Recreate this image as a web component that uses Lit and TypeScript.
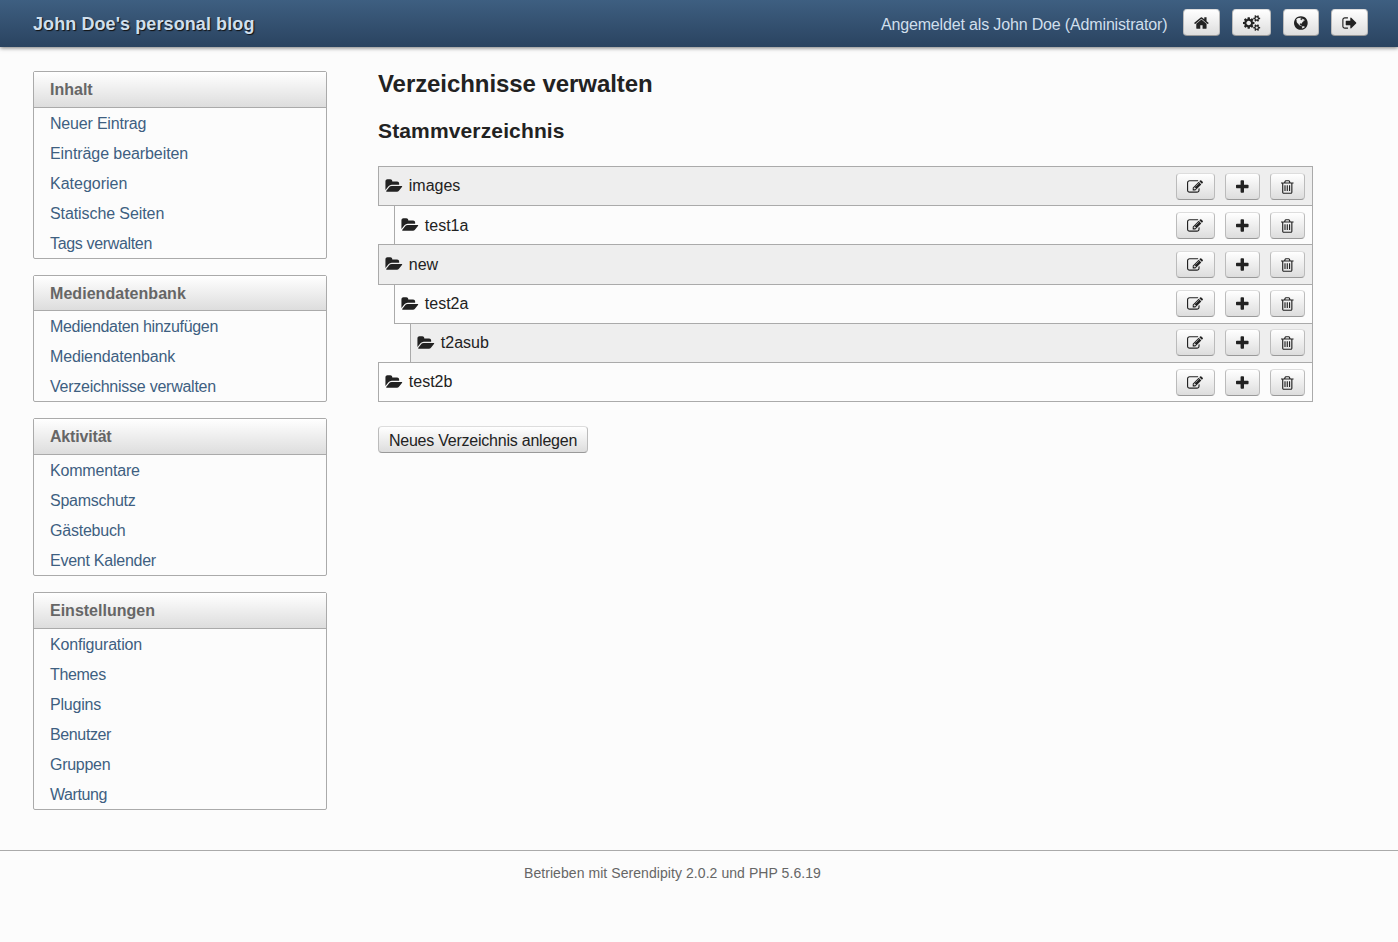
import { LitElement, html, css, svg } from "lit";
import { customElement, property } from "lit/decorators.js";
import { styleMap } from "lit/directives/style-map.js";

interface Glyph {
  x: number;
  w: number;
  d: string;
}

const smallCog = (y: number) =>
  `M1856 ${y}v140q0 16-149 31-12 27-30 52 51 113 51 138 0 4-4 7-122 71-124 71-8 0-46-47t-52-68q-20 2-30 2t-30-2q-14 21-52 68t-46 47q-2 0-124-71-4-3-4-7 0-25 51-138-18-25-30-52-149-15-149-31v-140q0-16 149-31 13-29 30-52-51-113-51-138 0-4 4-7 4-2 35-20t59-34 30-16q8 0 46 46.5t52 67.5q20-2 30-2t30 2q51-71 92-112l6-2q4 0 124 70 4 3 4 7 0 25-51 138 17 23 30 52 149 15 149 31z`;

/* Glyphs are drawn on a grid of 112 units per pixel, 1792 units high. */
const GLYPHS: Record<string, Glyph> = {
  home: {
    x: 64,
    w: 1664,
    d: "M1472 992v480q0 26-19 45t-45 19h-384v-384h-256v384h-384q-26 0-45-19t-19-45v-480q0-1 .5-3t.5-3l575-474 575 474q1 2 1 6zm223-69l-62 74q-8 9-21 11h-3q-13 0-21-7l-692-577-692 577q-12 8-24 7-13-2-21-11l-62-74q-8-10-7-23.5t11-21.5l719-599q32-26 76-26t76 26l244 204v-195q0-14 9-23t23-9h192q14 0 23 9t9 23v408l219 182q10 8 11 21.5t-7 23.5z",
  },
  cogs: {
    x: -64,
    w: 1920,
    d:
      "M832 896q0-106-75-181t-181-75-181 75-75 181 75 181 181 75 181-75 75-181zm768 512q0-52-38-90t-90-38-90 38-38 90q0 53 37.5 90.5t90.5 37.5 90.5-37.5 37.5-90.5zm0-1024q0-52-38-90t-90-38-90 38-38 90q0 53 37.5 90.5t90.5 37.5 90.5-37.5 37.5-90.5zm-384 421v185q0 10-7 19.5t-16 10.5l-155 24q-11 35-32 76 34 48 90 115 7 11 7 20 0 12-7 19-23 30-82.5 89.5t-78.5 59.5q-11 0-21-7l-115-90q-37 19-77 31-11 108-23 155-7 24-30 24h-186q-11 0-20-7.5t-10-17.5l-23-153q-34-10-75-31l-118 89q-7 7-20 7-11 0-21-8-144-133-144-160 0-9 7-19 10-14 41-53t47-61q-23-44-35-82l-152-24q-10-1-17-9.5t-7-19.5v-185q0-10 7-19.5t16-10.5l155-24q11-35 32-76-34-48-90-115-7-11-7-20 0-12 7-20 22-30 82-89t79-59q11 0 21 7l115 90q34-18 77-32 11-108 23-154 7-24 30-24h186q11 0 20 7.5t10 17.5l23 153q34 10 75 31l118-89q8-7 20-7 11 0 21 8 144 133 144 160 0 8-7 19-12 16-42 54t-45 60q23 48 34 82l152 23q10 2 17 10.5t7 19.5z" +
      smallCog(1338) +
      smallCog(314),
  },
  globe: {
    x: 128,
    w: 1536,
    d: "M896 128q209 0 385.5 103t279.5 279.5 103 385.5-103 385.5-279.5 279.5-385.5 103-385.5-103-279.5-279.5-103-385.5 103-385.5 279.5-279.5 385.5-103zm274 521q-2 1-9.5 9.5t-13.5 9.5q2 0 4.5-5t5-11 3.5-7q6-7 22-15 14-6 52-12 34-8 51 11-2-2 9.5-13t14.5-12q3-2 15-4.5t15-7.5l2-22q-12 1-17.5-7t-6.5-21q0 2-6 8 0-7-4.5-8t-11.5 1-9 1q-10-3-15-7.5t-8-16.5-4-15q-2-5-9.5-11t-9.5-10q-1-2-2.5-5.5t-3-6.5-4-5.5-5.5-2.5-7 5-7.5 10-4.5 5q-3-2-6-1.5t-4.5 1-4.5 3-5 3.5q-3 2-8.5 3t-8.5 2q15-5-1-11-10-4-16-3 9-4 7.5-12t-8.5-14h5q-1-4-8.5-8.5t-17.5-8.5-13-6q-8-5-34-9.5t-33-.5q-5 6-4.5 10.5t4 14 3.5 12.5q1 6-5.5 13t-6.5 12q0 7 14 15.5t10 21.5q-3 8-16 16t-16 12q-5 8-1.5 18.5t10.5 16.5q2 2 1.5 4t-3.5 4.5-5.5 4-6.5 3.5l-3 2q-11 5-20.5-6t-13.5-26q-7-25-16-30-23-8-29 1-5-13-41-26-25-9-58-4 6-1 0-15-7-15-19-12 3-6 4-17.5t1-13.5q3-13 12-23 1-1 7-8.5t9.5-13.5.5-6q35 4 50-11 5-5 11.5-17t10.5-17q9-6 14-5.5t14.5 5.5 14.5 5q14 1 15.5-11t-7.5-20q12 1 3-17-4-7-8-9-12-4-27 5-8 4 2 8-1-1-9.5 10.5t-16.5 17.5-16-5q-1-1-5.5-13.5t-9.5-13.5q-8 0-16 15 3-8-11-15t-24-8q19-12-8-27-7-4-20.5-5t-19.5 4q-5 7-5.5 11.5t5 8 10.5 5.5 11.5 4 8.5 3q14 10 8 14-2 1-8.5 3.5t-11.5 4.5-6 4q-3 4 0 14t-2 14q-5-5-9-17.5t-7-16.5q7 9-25 6l-10-1q-4 0-16 2t-20.5 1-13.5-8q-4-8 0-20 1-4 4-2-4-3-11-9.5t-10-8.5q-46 15-94 41 6 1 12-1 5-2 13-6.5t10-5.5q34-14 42-7l5-5q14 16 20 25-7-4-30-1-20 6-22 12 7 12 5 18-4-3-11.5-10t-14.5-11-15-5q-16 0-22 1-146 80-235 222 7 7 12 8 4 1 5 9t2.5 11 11.5-3q9 8 3 19 1-1 44 27 19 17 21 21 3 11-10 18-1-2-9-9t-9-4q-3 5 .5 18.5t10.5 12.5q-7 0-9.5 16t-2.5 35.5-1 23.5l2 1q-3 12 5.5 34.5t21.5 19.5q-13 3 20 43 6 8 8 9 3 2 12 7.5t15 10 10 10.5q4 5 10 22.5t14 23.5q-2 6 9.5 20t10.5 23q-1 0-2.5 1t-2.5 1q3 7 15.5 14t15.5 13q1 3 2 10t3 11 8 2q2-20-24-62-15-25-17-29-3-5-5.5-15.5t-4.5-14.5q2 0 6 1.5t8.5 3.5 7.5 4 2 3q-3 7 2 17.5t12 18.5 17 19 12 13q6 6 14 19.5t0 13.5q9 0 20 10.5t17 19.5q5 8 8 26t5 24q2 7 8.5 13.5t12.5 9.5l16 8 13 7q5 2 18.5 10.5t21.5 11.5q10 4 16 4t14.5-2.5 13.5-3.5q15-2 29 15t21 21q36 19 55 11-2 1 .5 7.5t8 15.5 9 14.5 5.5 8.5q5 6 18 15t18 15q6-4 7-9-3 8 7 20t18 10q14-3 14-32-31 15-49-18 0-1-2.5-5.5t-4-8.5-2.5-8.5 0-7.5 5-3q9 0 10-3.5t-2-12.5-4-13q-1-8-11-20t-12-15q-5 9-16 8t-16-9q0 1-1.5 5.5t-1.5 6.5q-13 0-15-1 1-3 2.5-17.5t3.5-22.5q1-4 5.5-12t7.5-14.5 4-12.5-4.5-9.5-17.5-2.5q-19 1-26 20-1 3-3 10.5t-5 11.5-9 7q-7 3-24 2t-24-5q-13-8-22.5-29t-9.5-37q0-10 2.5-26.5t3-25-5.5-24.5q3-2 9-9.5t10-10.5q2-1 4.5-1.5t4.5 0 4-1.5 3-6q-1-1-4-3-3-3-4-3 7 3 28.5-1.5t27.5 1.5q15 11 22-2 0-1-2.5-9.5t-.5-13.5q5 27 29 9 3 3 15.5 5t17.5 5q3 2 7 5.5t5.5 4.5 5-.5 8.5-6.5q10 14 12 24 11 40 19 44 7 3 11 2t4.5-9.5 0-14-1.5-12.5l-1-8v-18l-1-8q-15-3-18.5-12t1.5-18.5 15-18.5q1-1 8-3.5t15.5-6.5 12.5-8q21-19 15-35 7 0 11-9-1 0-5-3t-7.5-5-4.5-2q9-5 2-16 5-3 7.5-11t7.5-10q9 12 21 2 8-8 1-16 5-7 20.5-10.5t18.5-9.5q7 2 8-2t1-12 3-12q4-5 15-9t13-5l17-11q3-4 0-4 18 2 31-11 10-11-6-20 3-6-3-9.5t-15-5.5q3-1 11.5-.5t10.5-1.5q15-10-7-16-17-5-43 12zm-163 877q206-36 351-189-3-3-12.5-4.5t-12.5-3.5q-18-7-24-8 1-7-2.5-13t-8-9-12.5-8-11-7q-2-2-7-6t-7-5.5-7.5-4.5-8.5-2-10 1l-3 1q-3 1-5.5 2.5t-5.5 3-4 3 0 2.5q-21-17-36-22-5-1-11-5.5t-10.5-7-10-1.5-11.5 7q-5 5-6 15t-2 13q-7-5 0-17.5t2-18.5q-3-6-10.5-4.5t-12 4.5-11.5 8.5-9 6.5-8.5 5.5-8.5 7.5q-3 4-6 12t-5 11q-2-4-11.5-6.5t-9.5-5.5q2 10 4 35t5 38q7 31-12 48-27 25-29 40-4 22 12 26 0 7-8 20.5t-7 21.5q0 6 2 16z",
  },
  logout: {
    x: 30,
    w: 1664,
    d: "M704 1440q0 4 1 20t.5 26.5-3 23.5-10 19.5-20.5 6.5h-320q-119 0-203.5-84.5t-84.5-203.5v-704q0-119 84.5-203.5t203.5-84.5h320q13 0 22.5 9.5t9.5 22.5q0 4 1 20t.5 26.5-3 23.5-10 19.5-20.5 6.5h-320q-66 0-113 47t-47 113v704q0 66 47 113t113 47h312l11.5 1 11.5 3 8 5.5 7 9 2 13.5zm928-544q0 26-19 45l-544 544q-19 19-45 19t-45-19-19-45v-288h-448q-26 0-45-19t-19-45v-384q0-26 19-45t45-19h448v-288q0-26 19-45t45-19 45 19l544 544q19 19 19 45z",
  },
  edit: {
    x: 0,
    w: 1792,
    d: "M888 1184l116-116-152-152-116 116v56h96v96h56zm440-720q-16-16-33 1l-350 350q-17 17-1 33t33-1l350-350q17-17 1-33zm80 594v190q0 119-84.5 203.5t-203.5 84.5h-832q-119 0-203.5-84.5t-84.5-203.5v-832q0-119 84.5-203.5t203.5-84.5h832q63 0 117 25 15 7 18 23 3 17-9 29l-49 49q-14 14-32 8-23-6-45-6h-832q-66 0-113 47t-47 113v832q0 66 47 113t113 47h832q66 0 113-47t47-113v-126q0-13 9-22l64-64q15-15 35-7t20 29zm-96-738l288 288-672 672h-288v-288zm444 132l-92 92-288-288 92-92q28-28 68-28t68 28l152 152q28 28 28 68t-28 68z",
  },
  plus: {
    x: 192,
    w: 1408,
    d: "M1600 736v192q0 40-28 68t-68 28h-416v416q0 40-28 68t-68 28h-192q-40 0-68-28t-28-68v-416h-416q-40 0-68-28t-28-68v-192q0-40 28-68t68-28h416v-416q0-40 28-68t68-28h192q40 0 68 28t28 68v416h416q40 0 68 28t28 68z",
  },
  trash: {
    x: 192,
    w: 1408,
    d: "M704 736v576q0 14-9 23t-23 9h-64q-14 0-23-9t-9-23v-576q0-14 9-23t23-9h64q14 0 23 9t9 23zm256 0v576q0 14-9 23t-23 9h-64q-14 0-23-9t-9-23v-576q0-14 9-23t23-9h64q14 0 23 9t9 23zm256 0v576q0 14-9 23t-23 9h-64q-14 0-23-9t-9-23v-576q0-14 9-23t23-9h64q14 0 23 9t9 23zm128 724v-948h-896v948q0 22 7 40.5t14.5 27 10.5 8.5h832q3 0 10.5-8.5t14.5-27 7-40.5zm-672-1076h448l-48-117q-7-9-17-11h-317q-10 2-17 11zm928 32v64q0 14-9 23t-23 9h-96v948q0 83-47 143.5t-113 60.5h-832q-66 0-113-58.5t-47-141.5v-952h-96q-14 0-23-9t-9-23v-64q0-14 9-23t23-9h309l70-167q15-37 54-63t79-26h320q40 0 79 26t54 63l70 167h309q14 0 23 9t9 23z",
  },
  folder: {
    x: 0,
    w: 1904,
    d: "M1815 952q0 31-31 66l-336 396q-43 51-120.5 86.5t-143.5 35.5h-1088q-34 0-60.5-13t-26.5-43q0-31 31-66l336-396q43-51 120.5-86.5t143.5-35.5h1088q34 0 60.5 13t26.5 43zm-343-344v160h-832q-94 0-197 47.5t-164 119.5l-337 396-5 6q0-4-.5-12.5t-.5-12.5v-960q0-92 66-158t158-66h320q92 0 158 66t66 158v32h544q92 0 158 66t66 158z",
  },
};

@customElement("ui-icon")
class UiIcon extends LitElement {
  @property() name = "home";

  static styles = css`
    :host {
      display: block;
      height: 16px;
    }
    svg {
      display: block;
      fill: currentColor;
      overflow: visible;
    }
  `;

  render() {
    const g = GLYPHS[this.name];
    return html`<svg
      width=${g.w / 112}
      height="16"
      viewBox="${g.x} 0 ${g.w} 1792"
      aria-hidden="true"
    >
      ${svg`<path d=${g.d}></path>`}
    </svg>`;
  }
}

type Entry = [label: string, tracking: number];

/* Each label carries its letter spacing in pixels. */
const MENU: { title: Entry; items: Entry[] }[] = [
  {
    title: ["Inhalt", 0],
    items: [
      ["Neuer Eintrag", -0.19],
      ["Einträge bearbeiten", -0.08],
      ["Kategorien", 0],
      ["Statische Seiten", -0.09],
      ["Tags verwalten", -0.34],
    ],
  },
  {
    title: ["Mediendatenbank", 0.05],
    items: [
      ["Mediendaten hinzufügen", -0.33],
      ["Mediendatenbank", -0.14],
      ["Verzeichnisse verwalten", -0.25],
    ],
  },
  {
    title: ["Aktivität", -0.18],
    items: [
      ["Kommentare", -0.18],
      ["Spamschutz", -0.25],
      ["Gästebuch", -0.22],
      ["Event Kalender", -0.25],
    ],
  },
  {
    title: ["Einstellungen", 0],
    items: [
      ["Konfiguration", -0.18],
      ["Themes", -0.33],
      ["Plugins", -0.2],
      ["Benutzer", -0.37],
      ["Gruppen", -0.28],
      ["Wartung", -0.43],
    ],
  },
];

const tracked = (px: number) => styleMap({ letterSpacing: `${px}px` });

const DIRS = [
  { name: "images", depth: 0, look: "shaded" },
  { name: "test1a", depth: 1, look: "low" },
  { name: "new", depth: 0, look: "shaded low" },
  { name: "test2a", depth: 1, look: "" },
  { name: "t2asub", depth: 2, look: "shaded" },
  { name: "test2b", depth: 0, look: "" },
];

@customElement("app-root")
class AppRoot extends LitElement {
  static styles = css`
    :host {
      display: block;
      min-height: 942px;
      background: #fcfcfc;
      color: #222;
      font: 16px/24px "Liberation Sans", Arial, sans-serif;
    }
    * {
      box-sizing: border-box;
    }
    .top {
      display: flex;
      align-items: center;
      justify-content: space-between;
      height: 47px;
      padding: 0 30px 0 33px;
      background: linear-gradient(#3e5f81, #2a4360);
      box-shadow: 0 1px 4px #777;
      color: #d0dfec;
    }
    .brand {
      margin: 0;
      font-size: 18px;
      line-height: 24px;
      font-weight: bold;
      letter-spacing: 0.09px;
      text-shadow: 1px 1px 1px #111;
    }
    .user {
      display: flex;
      align-items: center;
    }
    .who {
      padding-top: 2px;
      margin-right: 16px;
      letter-spacing: -0.155px;
    }
    .links {
      display: flex;
      gap: 12px;
      margin-top: -2px;
    }
    .btn {
      display: flex;
      align-items: center;
      justify-content: center;
      height: 27px;
      padding: 0 10px;
      border: 1px solid #bbb;
      border-color: #ddd #bbb #999;
      border-radius: 4px;
      background: linear-gradient(#fff, #ddd);
      color: #222;
      font: inherit;
      white-space: nowrap;
    }
    .body {
      display: flex;
      align-items: flex-start;
      gap: 51px;
      padding: 24px 0 0 33px;
      height: 803px;
    }
    .menu {
      display: flex;
      flex-direction: column;
      gap: 16px;
      width: 294px;
    }
    .card {
      border: 1px solid #aaa;
      border-radius: 2px;
    }
    .card-title {
      margin: 0;
      height: 35.67px;
      padding-left: 16px;
      border-bottom: 1px solid #aaa;
      background: linear-gradient(#fff, #ddd);
      color: #666;
      font-size: 16px;
      line-height: 35px;
    }
    .list {
      margin: 0;
      padding: 0;
      list-style: none;
    }
    .item {
      height: 30px;
      padding-left: 16px;
      line-height: 32px;
      color: #3e5f81;
    }
    .main {
      width: 935px;
    }
    .h2 {
      margin: 0;
      font-size: 24px;
      line-height: 26px;
      letter-spacing: -0.07px;
    }
    .h3 {
      margin: 22px 0 0;
      font-size: 21px;
      line-height: 24px;
      letter-spacing: 0.14px;
    }
    .tree {
      margin: 23px 0 24px;
      padding: 0;
      list-style: none;
    }
    .dir {
      display: flex;
      align-items: center;
      height: 40.2px;
      padding: 0 7px 0 7.2px;
      border: 1px solid #aaa;
    }
    .dir + .dir {
      margin-top: -1px;
    }
    .shaded {
      background: #eee;
    }
    .name {
      margin: 0 auto 0 5.6px;
    }
    .low .name {
      margin-top: 1.6px;
    }
    .tools {
      display: flex;
      gap: 10.3px;
    }
    .tools .btn {
      padding: 1px 10.2px 0;
    }
    .new {
      width: 210px;
      padding-top: 2px;
      letter-spacing: -0.23px;
    }
    .foot {
      border-top: 1px solid #aaa;
      padding: 10px 0 0 524px;
      color: #666;
      font-size: 14px;
      letter-spacing: 0.065px;
    }
  `;

  render() {
    return html`
      <header class="top">
        <h1 class="brand">John Doe's personal blog</h1>
        <div class="user">
          <span class="who">Angemeldet als John Doe (Administrator)</span>
          <nav class="links">
            ${["home", "cogs", "globe", "logout"].map(
              (n) => html`<a class="btn"><ui-icon name=${n}></ui-icon></a>`
            )}
          </nav>
        </div>
      </header>
      <div class="body">
        <nav class="menu">
          ${MENU.map(
            (m) => html`<section class="card">
              <h3 class="card-title" style=${tracked(m.title[1])}>${m.title[0]}</h3>
              <ul class="list">
                ${m.items.map(
                  ([label, t]) => html`<li class="item" style=${tracked(t)}>${label}</li>`
                )}
              </ul>
            </section>`
          )}
        </nav>
        <main class="main">
          <h2 class="h2">Verzeichnisse verwalten</h2>
          <h3 class="h3">Stammverzeichnis</h3>
          <ul class="tree">
            ${DIRS.map(
              (d) => html`<li
                class="dir ${d.look}"
                style=${styleMap({ marginLeft: `${d.depth * 16}px` })}
              >
                <ui-icon name="folder"></ui-icon>
                <span class="name">${d.name}</span>
                <span class="tools">
                  ${["edit", "plus", "trash"].map(
                    (n) => html`<a class="btn"><ui-icon name=${n}></ui-icon></a>`
                  )}
                </span>
              </li>`
            )}
          </ul>
          <button class="btn new">Neues Verzeichnis anlegen</button>
        </main>
      </div>
      <footer class="foot">Betrieben mit Serendipity 2.0.2 und PHP 5.6.19</footer>
    `;
  }
}
